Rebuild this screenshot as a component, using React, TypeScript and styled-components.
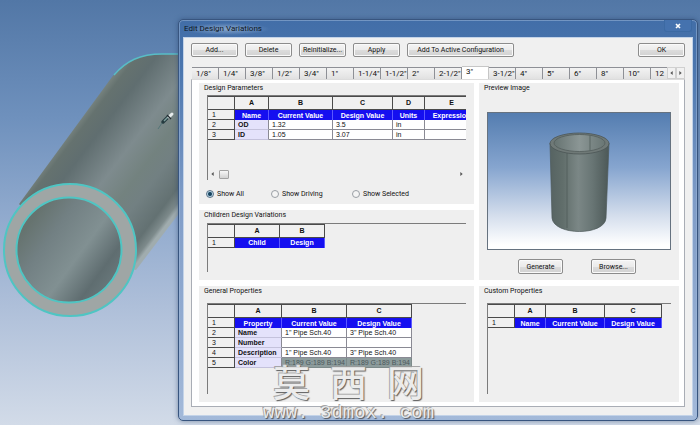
import React, { useState } from 'react';
import styled, { createGlobalStyle, css } from 'styled-components';

const GlobalStyle = createGlobalStyle`
  * { box-sizing: border-box; }
  body { margin: 0; }
  body, button, input, table {
    font-family: Roboto, 'Liberation Sans', Arial, sans-serif;
    font-size: 7px;
    line-height: 10px;
    color: #111;
  }
`;

const Desktop = styled.main`
  position: relative;
  min-height: 100vh;
  display: flex;
  flex-direction: column;
  padding: 19px 2px 4px 178px;
  overflow: hidden;
  background: linear-gradient(#5277a6, #6f91bd 28%, #8fa9cd 50%, #aebfd9 72%, #d2dbe8);
`;

const Scene = styled.svg`
  position: absolute;
  top: 0;
  left: 0;
`;

const Dialog = styled.section`
  position: relative;
  flex: 1;
  display: flex;
  flex-direction: column;
  padding: 0 5px 5px;
  border: 1px solid #38557f;
  border-radius: 5px;
  background: linear-gradient(#426ea8, #4b76ae 12%, #7f9cc7 45%, #a3b9d9);
  box-shadow: inset 0 0 0 1px #9db8da88, 0 0 5px #24406988;
`;

const TitleBar = styled.header`
  height: 18px;
  display: flex;
  align-items: center;
  justify-content: space-between;
`;

const Title = styled.h1`
  margin: 0;
  padding: 0 8px 0 0;
  font-size: 8px;
  font-weight: 400;
  line-height: 12px;
  color: #0c1522;
  background: radial-gradient(closest-side, #a0bad9bb, #a0bad900);
`;

const CloseButton = styled.button`
  width: 28px;
  height: 12px;
  margin: 0 0 6px;
  padding: 0;
  display: grid;
  place-items: center;
  border: 1px solid #3c6aa3;
  border-top: 0;
  border-radius: 0 0 3px 3px;
  background: #4572ae;
`;

const Body = styled.div`
  flex: 1;
  display: flex;
  flex-direction: column;
  padding: 5px 7px 8px;
  background: #f0f0f0;
  box-shadow: 0 0 0 1px #c3d3e8;
`;

const Toolbar = styled.div`
  display: flex;
  gap: 7px;
`;

const Button = styled.button<{ $wide?: boolean; $end?: boolean }>`
  width: ${p => (p.$wide ? 107 : 47)}px;
  height: 14px;
  padding: 0;
  border: 1px solid #8c8c8c;
  border-radius: 2px;
  background: linear-gradient(#f4f4f4, #ebebeb 50%, #dcdcdc 51%, #d2d2d2);
  box-shadow: inset 0 0 0 1px #fafafa;
  ${p => p.$end && css`margin-left: auto;`}
`;

const TabBar = styled.div`
  display: flex;
  align-items: flex-end;
  height: 13px;
  margin: 9px 0 0 1px;
`;

const TabList = styled.div`
  flex: 1;
  min-width: 0;
  display: flex;
  align-items: flex-end;
  overflow: hidden;
`;

const Tab = styled.button<{ $active: boolean }>`
  flex: 0 0 27px;
  height: ${p => (p.$active ? 13 : 12)}px;
  padding: 0 0 0 4px;
  font-size: 8px;
  text-align: left;
  white-space: nowrap;
  border: solid #8e9096;
  border-width: 1px 1px 0 0;
  background: ${p => (p.$active ? '#fff' : 'linear-gradient(#f3f3f3, #e1e1e1)')};
  ${p => p.$active && css`border-color: #c6c6c6; padding-bottom: 2px;`}
`;

const TabScroll = styled.button`
  width: 9px;
  height: 12px;
  padding: 0;
  display: grid;
  place-items: center;
  border: 1px solid #d0d0d0;
  background: #f1f1f1;
`;

const Panel = styled.div`
  flex: 1;
  display: grid;
  grid-template-columns: 275fr 200fr;
  grid-template-rows: auto auto 1fr;
  gap: 6px 5px;
  padding: 3px 5px 4px 7px;
  border: 1px solid #a9adb5;
  border-top-color: #dcdcdc;
  background: #fff;
`;

const Group = styled.section<{ $tall?: boolean }>`
  min-width: 0;
  display: flex;
  flex-direction: column;
  padding: 0 8px 8px;
  background: #efefef;
  ${p => p.$tall && css`grid-row: span 2;`}
`;

const GroupTitle = styled.h2<{ $space: number }>`
  margin: 0 0 ${p => p.$space}px -3px;
  font-size: 7px;
  font-weight: 400;
  line-height: 10px;
`;

const Sheet = styled.div<{ $height: number }>`
  flex: 1 0 ${p => p.$height}px;
  display: flex;
  flex-direction: column;
  justify-content: space-between;
  overflow: hidden;
  border: solid #7b7b7b;
  border-width: 1px 0 0 1px;
`;

const Grid = styled.table`
  table-layout: fixed;
  width: 0;
  border-collapse: separate;
  border-spacing: 0;
  font-family: 'Liberation Sans', Arial, sans-serif;
`;

const ColHead = styled.th`
  height: 14px;
  padding: 0;
  border: solid #4a4a4a;
  border-width: 1px 1px 1px 0;
  background: #f0f0f0;
`;

const RowHead = styled.th`
  height: 10px;
  padding: 0 0 0 4px;
  line-height: 9px;
  font-weight: 400;
  text-align: left;
  border: solid #4a4a4a;
  border-width: 0 1px 1px 0;
  background: #f0f0f0;
`;

const Field = styled.th`
  padding: 0;
  line-height: 9px;
  white-space: nowrap;
  color: #fff;
  background: #150ff0;
  border-right: 1px solid #5b58ff;
`;

const Cell = styled.td<{ $kind?: 'label' | 'color' }>`
  padding: 0 0 0 3px;
  line-height: 9px;
  white-space: nowrap;
  border: solid #8a8a94;
  border-width: 0 1px 1px 0;
  background: #fff;
  ${p => p.$kind === 'label' && css`font-weight: 700; background: #e4e2fb; border-bottom-color: #c4c2dc;`}
  ${p => p.$kind === 'color' && css`color: #4c595c; background: #8d9c9c; border-color: #7c8a8a;`}
`;

const ScrollRow = styled.div`
  display: flex;
  align-items: center;
  height: 11px;
  padding: 0 3px;
`;

const Arrow = styled.svg`
  display: block;
  width: 3px;
  height: 4px;
  fill: #555;
`;

const Thumb = styled.div`
  width: 10px;
  height: 9px;
  margin: 0 auto 0 5px;
  border: 1px solid #a2a2a2;
  border-radius: 1px;
  background: linear-gradient(#f7f7f7, #d2d2d2);
`;

const Radios = styled.div`
  display: grid;
  grid-template-columns: 65px 81px auto;
  padding: 9px 0 0;
  margin-bottom: -3px;
`;

const RadioLabel = styled.label`
  display: flex;
  align-items: center;
  gap: 4px;
`;

const Radio = styled.input`
  appearance: none;
  width: 8px;
  height: 8px;
  margin: 0 -1px 0 -1px;
  border: 1px solid #9a9fa5;
  border-radius: 50%;
  background: #f4f4f4;
  &:checked {
    border-color: #5a7186;
    background: radial-gradient(#16435f 35%, #b9d6e6 60%);
  }
`;

const Preview = styled.svg`
  display: block;
  width: 100%;
  max-width: 184px;
  height: 138px;
  border: 1px solid #66727f;
  background: linear-gradient(#547db0, #86a5cf 40%, #d3ddec 75%, #fff 97%);
`;

const PreviewActions = styled.div`
  display: flex;
  gap: 28px;
  margin-bottom: -2px;
  padding: 9px 0 0 31px;
`;

const PreviewButton = styled(Button)`
  width: 45px;
  height: 15px;
`;

const Watermark = styled.div`
  position: absolute;
  left: 263px;
  bottom: 1px;
  display: flex;
  flex-direction: column;
  align-items: center;
  color: #ececec;
  text-shadow: 1px 1px 1px #444, -1px -1px 0 #9a9a9a;
  opacity: 0.85;
  pointer-events: none;
`;

const WatermarkName = styled.div`
  display: flex;
  gap: 20px;
  font: 500 37px/42px 'Noto Sans CJK SC', sans-serif;
`;

const WatermarkSite = styled.div`
  font: 400 19px/22px 'Liberation Mono', monospace;
`;

type SheetTableProps = {
  label: string;
  widths: number[];
  fields: string[];
  rows?: string[][];
};

function SheetTable({ label, widths, fields, rows = [] }: SheetTableProps) {
  return (
    <Grid aria-label={label}>
      <colgroup>
        {widths.map((w, i) => <col key={i} width={w} />)}
      </colgroup>
      <thead>
        <tr>
          <ColHead />
          {fields.map((f, i) => <ColHead key={f} scope="col">{'ABCDE'[i]}</ColHead>)}
        </tr>
      </thead>
      <tbody>
        <tr>
          <RowHead scope="row">1</RowHead>
          {fields.map(f => <Field key={f}>{f}</Field>)}
        </tr>
        {rows.map((row, r) => (
          <tr key={row[0]}>
            <RowHead scope="row">{r + 2}</RowHead>
            {row.map((value, i) => (
              <Cell key={i} $kind={i === 0 ? 'label' : row[0] === 'Color' ? 'color' : undefined}>{value}</Cell>
            ))}
          </tr>
        ))}
      </tbody>
    </Grid>
  );
}

function PipeScene() {
  return (
    <Scene width="320" height="425" viewBox="0 0 320 425" aria-hidden="true">
      <defs>
        <linearGradient id="pipe" gradientUnits="userSpaceOnUse" x1="67" y1="137" x2="172" y2="217">
          <stop offset="0" stopColor="#75817d" />
          <stop offset="0.05" stopColor="#65726f" />
          <stop offset="0.17" stopColor="#606e70" />
          <stop offset="0.42" stopColor="#7e8b8e" />
          <stop offset="0.6" stopColor="#73827f" />
          <stop offset="0.72" stopColor="#728082" />
          <stop offset="0.9" stopColor="#637172" />
          <stop offset="0.97" stopColor="#7d8a8b" />
          <stop offset="1" stopColor="#a0acae" />
        </linearGradient>
        <linearGradient id="bore" gradientUnits="userSpaceOnUse" x1="30" y1="222" x2="112" y2="282">
          <stop offset="0" stopColor="#66736f" />
          <stop offset="0.25" stopColor="#728083" />
          <stop offset="0.58" stopColor="#819092" />
          <stop offset="0.85" stopColor="#5f6d70" />
          <stop offset="1" stopColor="#68777a" />
        </linearGradient>
      </defs>
      <path d="M19 204 L112 77 C124 61 140 54 162 54 L300 54 L136 270 L70 260 Z" fill="url(#pipe)" />
      <path d="M114 75 C126 61 140 54 162 54 L200 54" fill="none" stroke="#58bdc6" strokeWidth="1.4" />
      <circle cx="70" cy="250" r="66" fill="#9fa6a5" stroke="#4fc5c3" strokeWidth="2" />
      <circle cx="69" cy="250" r="52.5" fill="url(#bore)" stroke="#4fc5c3" strokeWidth="2" />
      <path d="M163 122 L168 117" stroke="#253b40" strokeWidth="3.5" strokeLinecap="round" />
      <path d="M164 121 L168 117" stroke="#7fa09d" strokeWidth="1.5" />
      <path d="M169 117 L172 114" stroke="#e7ecec" strokeWidth="3" strokeLinecap="round" />
      <path d="M167 115 L171 119" stroke="#202b30" strokeWidth="1.3" />
      <path d="M158 129 L162 123" stroke="#547578" />
    </Scene>
  );
}

function PipePreview() {
  return (
    <Preview viewBox="0 0 182 136" role="img" aria-label="Pipe preview">
      <defs>
        <linearGradient id="wall">
          <stop offset="0" stopColor="#566362" />
          <stop offset="0.22" stopColor="#616e6b" />
          <stop offset="0.48" stopColor="#7b8786" />
          <stop offset="0.72" stopColor="#687574" />
          <stop offset="1" stopColor="#4c5857" />
        </linearGradient>
        <linearGradient id="inside">
          <stop offset="0" stopColor="#667371" />
          <stop offset="0.5" stopColor="#8b9695" />
          <stop offset="1" stopColor="#697674" />
        </linearGradient>
      </defs>
      <path d="M62 30 L64 105 C66 123 117 123 118 105 L121 30 Z" fill="url(#wall)" stroke="#4d5959" strokeWidth="0.7" />
      <path d="M79 38 V115" stroke="#55615f" strokeWidth="1" />
      <ellipse cx="91.5" cy="30.5" rx="29.5" ry="10.5" fill="#6f7977" stroke="#4b5656" strokeWidth="0.8" />
      <ellipse cx="91.5" cy="30" rx="25.5" ry="8.5" fill="url(#inside)" stroke="#535d5c" strokeWidth="0.8" />
      <path d="M102 22 V38" stroke="#596563" />
    </Preview>
  );
}

const TABS = ['1/8"', '1/4"', '3/8"', '1/2"', '3/4"', '1"', '1-1/4"', '1-1/2"', '2"', '2-1/2"', '3"', '3-1/2"', '4"', '5"', '6"', '8"', '10"', '12'];
const FILTERS = ['Show All', 'Show Driving', 'Show Selected'];

export default function App() {
  const [tab, setTab] = useState('3"');
  const [filter, setFilter] = useState('Show All');

  return (
    <Desktop>
      <GlobalStyle />
      <PipeScene />
      <Dialog role="dialog" aria-labelledby="dialog-title">
        <TitleBar>
          <Title id="dialog-title">Edit Design Variations</Title>
          <CloseButton aria-label="Close">
            <svg width="6" height="6" viewBox="0 0 6 6">
              <path d="M1 1 L5 5 M5 1 L1 5" stroke="#fff" strokeWidth="1.6" />
            </svg>
          </CloseButton>
        </TitleBar>
        <Body>
          <Toolbar>
            <Button>Add...</Button>
            <Button>Delete</Button>
            <Button>Reinitialize...</Button>
            <Button>Apply</Button>
            <Button $wide>Add To Active Configuration</Button>
            <Button $end>OK</Button>
          </Toolbar>
          <TabBar>
            <TabList role="tablist">
              {TABS.map(t => (
                <Tab key={t} role="tab" aria-selected={t === tab} $active={t === tab} onClick={() => setTab(t)}>{t}</Tab>
              ))}
            </TabList>
            <TabScroll aria-label="Previous tabs"><Arrow viewBox="0 0 3 5"><path d="M3 0 V5 L0 2.5 Z" /></Arrow></TabScroll>
            <TabScroll aria-label="Next tabs"><Arrow viewBox="0 0 3 5"><path d="M0 0 V5 L3 2.5 Z" /></Arrow></TabScroll>
          </TabBar>
          <Panel role="tabpanel">
            <Group>
              <GroupTitle $space={2}>Design Parameters</GroupTitle>
              <Sheet $height={84}>
                <SheetTable
                  label="Design Parameters"
                  widths={[27, 34, 64, 60, 32, 54]}
                  fields={['Name', 'Current Value', 'Design Value', 'Units', 'Expression']}
                  rows={[['OD', '1.32', '3.5', 'in', ''], ['ID', '1.05', '3.07', 'in', '']]}
                />
                <ScrollRow>
                  <Arrow viewBox="0 0 3 5"><path d="M3 0 V5 L0 2.5 Z" /></Arrow>
                  <Thumb />
                  <Arrow viewBox="0 0 3 5"><path d="M0 0 V5 L3 2.5 Z" /></Arrow>
                </ScrollRow>
              </Sheet>
              <Radios role="radiogroup" aria-label="Filter">
                {FILTERS.map(f => (
                  <RadioLabel key={f}>
                    <Radio type="radio" name="filter" checked={f === filter} onChange={() => setFilter(f)} />
                    {f}
                  </RadioLabel>
                ))}
              </Radios>
            </Group>
            <Group $tall>
              <GroupTitle $space={19}>Preview Image</GroupTitle>
              <PipePreview />
              <PreviewActions>
                <PreviewButton>Generate</PreviewButton>
                <PreviewButton>Browse...</PreviewButton>
              </PreviewActions>
            </Group>
            <Group>
              <GroupTitle $space={3}>Children Design Variations</GroupTitle>
              <Sheet $height={49}>
                <SheetTable label="Children Design Variations" widths={[27, 45, 45]} fields={['Child', 'Design']} />
              </Sheet>
            </Group>
            <Group>
              <GroupTitle $space={7}>General Properties</GroupTitle>
              <Sheet $height={90}>
                <SheetTable
                  label="General Properties"
                  widths={[27, 47, 65, 65]}
                  fields={['Property', 'Current Value', 'Design Value']}
                  rows={[
                    ['Name', '1" Pipe Sch.40', '3" Pipe Sch.40'],
                    ['Number', '', ''],
                    ['Description', '1" Pipe Sch.40', '3" Pipe Sch.40'],
                    ['Color', 'R:189 G:189 B:194', 'R:189 G:189 B:194'],
                  ]}
                />
              </Sheet>
            </Group>
            <Group>
              <GroupTitle $space={7}>Custom Properties</GroupTitle>
              <Sheet $height={90}>
                <SheetTable label="Custom Properties" widths={[27, 31, 59, 57]} fields={['Name', 'Current Value', 'Design Value']} />
              </Sheet>
            </Group>
          </Panel>
        </Body>
      </Dialog>
      <Watermark>
        <WatermarkName><span>莫</span><span>西</span><span>网</span></WatermarkName>
        <WatermarkSite>www. 3dmox. com</WatermarkSite>
      </Watermark>
    </Desktop>
  );
}
